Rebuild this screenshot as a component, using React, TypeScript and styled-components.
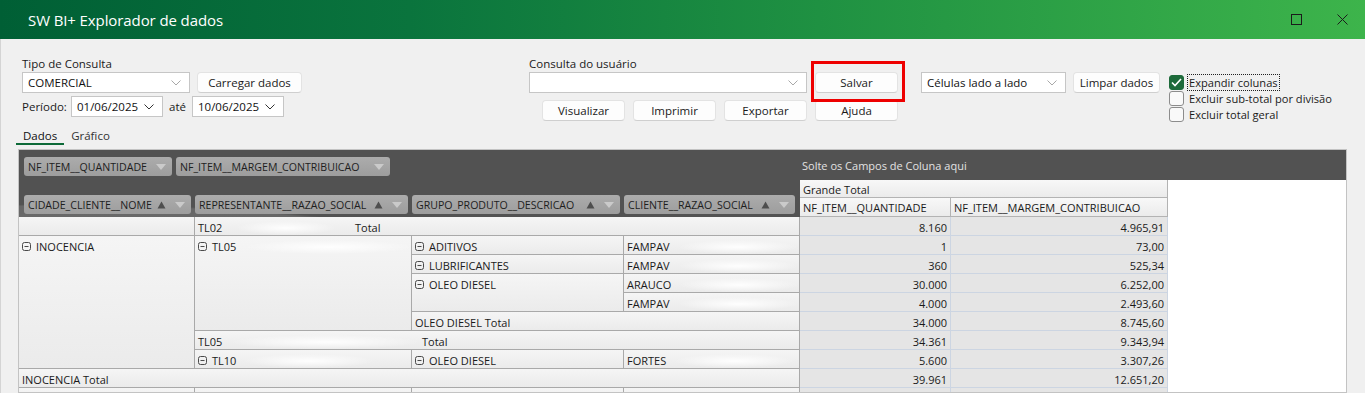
import React from 'react';
import styled, { createGlobalStyle } from 'styled-components';

const Global = createGlobalStyle`
  html, body { margin: 0; padding: 0; }
  body {
    width: 1365px; height: 393px; overflow: hidden; background: #f0f0f0;
    font-family: "Open Sans", "Noto Sans", sans-serif;
  }
  * { box-sizing: border-box; }
`;

const Window = styled.div`
  width: 1365px; height: 393px; display: flex; flex-direction: column;
  background: #f0f0f0; overflow: hidden;
`;

const TitleBar = styled.div`
  height: 39px; flex: none; display: flex; align-items: center;
  background: linear-gradient(90deg, #005f35 0%, #0a743d 30%, #1f9142 60%, #3db44b 100%);
  padding-left: 28px;
`;

const Title = styled.div`
  color: #ffffff; font-size: 15px; letter-spacing: -0.1px; padding-top: 1px;
`;

const WinControls = styled.div`
  margin-left: auto; display: flex; height: 100%;
`;

const WinButton = styled.div`
  width: 46px; height: 100%; display: flex; align-items: center; justify-content: center;
`;

const Body = styled.div`
  flex: 1; display: flex; flex-direction: column; min-height: 0;
  box-shadow: inset 1px 0 0 #d4d4d4;
`;

const Controls = styled.div`
  height: 87px; flex: none; display: flex; padding: 16px 0 0 22px;
  font-size: 11.5px; color: #1a1a1a;
`;

const Group = styled.div<{ $w?: number }>`
  ${p => (p.$w ? `width: ${p.$w}px;` : '')}
  flex: none; display: flex; flex-direction: column;
`;

const Label = styled.div`
  height: 17px; line-height: 17px;
`;

const Row = styled.div<{ $mt?: number; $pl?: number; $gap?: number; $top?: boolean }>`
  display: flex; align-items: ${p => (p.$top ? 'flex-start' : 'center')};
  gap: ${p => p.$gap ?? 7}px;
  margin-top: ${p => p.$mt ?? 0}px;
  padding-left: ${p => p.$pl ?? 0}px;
`;

const SelectBox = styled.div<{ $w: number }>`
  width: ${p => p.$w}px; height: 21px; background: #ffffff;
  border: 1px solid #c6c6c6; display: flex; align-items: center;
  padding: 0 8px 0 5px; font-size: 11.5px; color: #111;
`;

const SelectText = styled.span`
  flex: 1; white-space: nowrap;
`;

const Button = styled.div<{ $w: number }>`
  width: ${p => p.$w}px; height: 21px; background: #fdfdfd;
  border: 1px solid #e3e3e3; border-bottom-color: #cfcfcf; border-radius: 4px;
  display: flex; align-items: center; justify-content: center;
  font-size: 11.5px; color: #1a1a1a;
`;

const Highlight = styled.div`
  position: relative;
`;

const RedFrame = styled.div`
  position: absolute; left: -4px; top: -11px; width: 94px; height: 41px;
  border: 3px solid #ee0000; pointer-events: none;
`;

const InlineText = styled.span<{ $w?: number; $center?: boolean }>`
  ${p => (p.$w ? `width: ${p.$w}px;` : '')}
  text-align: ${p => (p.$center ? 'center' : 'left')};
  white-space: nowrap;
`;

const Checks = styled.div`
  display: flex; flex-direction: column; gap: 2px; margin-top: 3px; margin-left: 2px;
`;

const CheckRow = styled.div`
  display: flex; align-items: center; gap: 4px; height: 14px;
`;

const Box = styled.div<{ $checked?: boolean }>`
  width: 15px; height: 15px; border-radius: 3px; flex: none;
  display: flex; align-items: center; justify-content: center;
  background: ${p => (p.$checked ? '#1d6a3a' : '#f9f9f9')};
  border: 1px solid ${p => (p.$checked ? '#1d6a3a' : '#8c8c8c')};
`;

const CheckLabel = styled.span<{ $focus?: boolean }>`
  font-size: 11.1px; white-space: nowrap; padding: 0 1px;
  outline: ${p => (p.$focus ? '1px dotted #202020' : 'none')};
`;

const Tabs = styled.div`
  height: 19px; flex: none; display: flex; padding-left: 16px; font-size: 11.5px;
`;

const Tab = styled.div<{ $active?: boolean }>`
  height: 19px; padding: 2px 7px 0; line-height: 15px;
  color: ${p => (p.$active ? '#111' : '#333')};
  border-bottom: 2px solid ${p => (p.$active ? '#0d6a38' : 'transparent')};
`;

const Pivot = styled.div`
  margin: 4px 18px 0 18px; flex: 1; min-height: 0;
  border: 1px solid #c3c3c3; background: #ffffff; overflow: hidden;
  display: grid;
  grid-template-columns: 176px 217px 212px 176px 151px 217px 1fr;
  grid-template-rows: 30px 18px 19px repeat(10, 19px);
  font-size: 11px; color: #1a1a1a;
`;

const FieldZone = styled.div`
  grid-row: 1 / 4; grid-column: 1 / 5;
  background:
    radial-gradient(ellipse 560px 60px at 40px 92px, rgba(255,255,255,0.16) 0%, rgba(255,255,255,0.12) 60%, rgba(255,255,255,0) 63%),
    #525252;
  display: flex; flex-direction: column; justify-content: space-between;
  padding: 7px 0 3px 5px;
`;

const DropZone = styled.div`
  grid-row: 1; grid-column: 5 / 8; background: #525252;
  color: #e2e2e2; padding: 8px 0 0 2px; font-size: 11px;
`;

const ChipRow = styled.div`
  display: flex; gap: 4px;
`;

const Chip = styled.div<{ $w: number }>`
  width: ${p => p.$w}px; height: 19px; flex: none;
  background: linear-gradient(180deg, #acacac, #9d9d9d);
  border-radius: 3px; display: flex; align-items: center;
  padding: 0 6px 0 4px; color: #1e1e1e; font-size: 10.6px; white-space: nowrap;
`;

const ChipIcons = styled.span`
  margin-left: auto; display: flex; align-items: center; gap: 9px;
`;

const HeadCell = styled.div<{ $col: string; $row: string }>`
  grid-column: ${p => p.$col}; grid-row: ${p => p.$row};
  background: linear-gradient(180deg, #f8f8f8, #ebebeb);
  border-right: 1px solid #b3b3b3; border-bottom: 1px solid #b3b3b3;
  padding: 2px 3px 0; line-height: 16px; white-space: nowrap;
`;

const RowCell = styled.div<{ $col: string; $row: string }>`
  grid-column: ${p => p.$col}; grid-row: ${p => p.$row};
  background: linear-gradient(180deg, #f5f5f5, #ebebeb);
  border-right: 1px solid #a9a9a9; border-bottom: 1px solid #a9a9a9;
  padding: 2px 3px 0; line-height: 17px; white-space: nowrap;
  display: flex; align-items: flex-start; overflow: hidden;
`;

const Expand = styled.span`
  display: inline-flex; align-items: center; height: 17px; margin-right: 5px;
`;

const Name = styled.span<{ $w?: number }>`
  display: inline-flex; align-items: flex-start; flex: none;
  ${p => (p.$w ? `width: ${p.$w}px;` : '')}
`;

const Smudge = styled.span<{ $w: number; $ml?: number }>`
  display: inline-block; width: ${p => p.$w}px; height: 14px; margin-top: 2px;
  margin-left: ${p => p.$ml ?? 8}px;
  background: radial-gradient(ellipse closest-side, rgba(255,255,255,0.95), rgba(255,255,255,0));
`;

const ValueCell = styled.div<{ $col: number; $row: number }>`
  grid-column: ${p => p.$col}; grid-row: ${p => p.$row};
  background: #e5e5e5;
  border-right: 1px solid #ccd5e2; border-bottom: 1px solid #ccd5e2;
  padding: 2px 3px 0 0; line-height: 17px; text-align: right; white-space: nowrap;
`;

const Chevron = ({ color = '#a8a8a8' }: { color?: string }) => (
  <svg width="10" height="6" viewBox="0 0 10 6">
    <path d="M0.5 0.5 L5 5 L9.5 0.5" fill="none" stroke={color} strokeWidth="1" />
  </svg>
);

const SortUp = () => (
  <svg width="9" height="8" viewBox="0 0 9 8"><path d="M4.5 0.5 L8.5 7.5 L0.5 7.5 Z" fill="#4e4e4e" /></svg>
);

const DropDown = () => (
  <svg width="10" height="6" viewBox="0 0 10 6"><path d="M0 0 L10 0 L5 6 Z" fill="#cacaca" /></svg>
);

const Minus = () => (
  <svg width="9" height="9" viewBox="0 0 9 9">
    <rect x="0.5" y="0.5" width="8" height="8" rx="2" fill="none" stroke="#4a4a4a" />
    <path d="M2.5 4.5 H6.5" stroke="#4a4a4a" />
  </svg>
);

const Check = () => (
  <svg width="11" height="9" viewBox="0 0 11 9">
    <path d="M1 4.5 L4 7.5 L10 1" fill="none" stroke="#ffffff" strokeWidth="1.6" />
  </svg>
);

const values: [string, string][] = [
  ['8.160', '4.965,91'],
  ['1', '73,00'],
  ['360', '525,34'],
  ['30.000', '6.252,00'],
  ['4.000', '2.493,60'],
  ['34.000', '8.745,60'],
  ['34.361', '9.343,94'],
  ['5.600', '3.307,26'],
  ['39.961', '12.651,20'],
  ['', ''],
];

const r = (n: number, span = 1) => `${3 + n} / span ${span}`;

export default function App() {
  return (
    <Window>
      <Global />
      <TitleBar>
        <Title>SW BI+ Explorador de dados</Title>
        <WinControls>
          <WinButton>
            <svg width="11" height="11" viewBox="0 0 11 11">
              <rect x="0.5" y="0.5" width="10" height="10" fill="none" stroke="#1b1b1b" />
            </svg>
          </WinButton>
          <WinButton>
            <svg width="11" height="11" viewBox="0 0 11 11">
              <path d="M0.5 0.5 L10.5 10.5 M10.5 0.5 L0.5 10.5" stroke="#1b1b1b" />
            </svg>
          </WinButton>
        </WinControls>
      </TitleBar>
      <Body>
        <Controls>
          <Group $w={507}>
            <Label>Tipo de Consulta</Label>
            <Row>
              <SelectBox $w={168}><SelectText>COMERCIAL</SelectText><Chevron /></SelectBox>
              <Button $w={105}>Carregar dados</Button>
            </Row>
            <Row $mt={3} $gap={0}>
              <InlineText $w={49}>Período:</InlineText>
              <SelectBox $w={92}><SelectText>01/06/2025</SelectText><Chevron color="#333" /></SelectBox>
              <InlineText $w={29} $center>até</InlineText>
              <SelectBox $w={92}><SelectText>10/06/2025</SelectText><Chevron color="#333" /></SelectBox>
            </Row>
          </Group>
          <Group $w={392}>
            <Label>Consulta do usuário</Label>
            <Row $gap={8}>
              <SelectBox $w={278}><SelectText></SelectText><Chevron /></SelectBox>
              <Highlight>
                <Button $w={83}>Salvar</Button>
                <RedFrame />
              </Highlight>
            </Row>
            <Row $mt={7} $pl={13} $gap={8}>
              <Button $w={83}>Visualizar</Button>
              <Button $w={83}>Imprimir</Button>
              <Button $w={83}>Exportar</Button>
              <Button $w={83}>Ajuda</Button>
            </Row>
          </Group>
          <Group>
            <Row $mt={17} $gap={7} $top>
              <SelectBox $w={145}><SelectText>Células lado a lado</SelectText><Chevron /></SelectBox>
              <Button $w={87}>Limpar dados</Button>
              <Checks>
                <CheckRow><Box $checked><Check /></Box><CheckLabel $focus>Expandir colunas</CheckLabel></CheckRow>
                <CheckRow><Box /><CheckLabel>Excluir sub-total por divisão</CheckLabel></CheckRow>
                <CheckRow><Box /><CheckLabel>Excluir total geral</CheckLabel></CheckRow>
              </Checks>
            </Row>
          </Group>
        </Controls>
        <Tabs>
          <Tab $active>Dados</Tab>
          <Tab>Gráfico</Tab>
        </Tabs>
        <Pivot>
          <FieldZone>
            <ChipRow>
              <Chip $w={148}>NF_ITEM__QUANTIDADE<ChipIcons><DropDown /></ChipIcons></Chip>
              <Chip $w={214}>NF_ITEM__MARGEM_CONTRIBUICAO<ChipIcons><DropDown /></ChipIcons></Chip>
            </ChipRow>
            <ChipRow>
              <Chip $w={167}>CIDADE_CLIENTE__NOME<ChipIcons><SortUp /><DropDown /></ChipIcons></Chip>
              <Chip $w={213}>REPRESENTANTE__RAZAO_SOCIAL<ChipIcons><SortUp /><DropDown /></ChipIcons></Chip>
              <Chip $w={208}>GRUPO_PRODUTO__DESCRICAO<ChipIcons><SortUp /><DropDown /></ChipIcons></Chip>
              <Chip $w={171}>CLIENTE__RAZAO_SOCIAL<ChipIcons><SortUp /><DropDown /></ChipIcons></Chip>
            </ChipRow>
          </FieldZone>
          <DropZone>Solte os Campos de Coluna aqui</DropZone>
          <HeadCell $col="5 / 7" $row="2">Grande Total</HeadCell>
          <HeadCell $col="5" $row="3">NF_ITEM__QUANTIDADE</HeadCell>
          <HeadCell $col="6" $row="3">NF_ITEM__MARGEM_CONTRIBUICAO</HeadCell>

          <RowCell $col="1" $row={r(1)} />
          <RowCell $col="2 / 5" $row={r(1)}>
            <Name $w={157}>TL02<Smudge $w={100} $ml={14} /></Name>Total
          </RowCell>

          <RowCell $col="1" $row={r(2, 7)}><Expand><Minus /></Expand>INOCENCIA</RowCell>
          <RowCell $col="2" $row={r(2, 5)}><Expand><Minus /></Expand><Name>TL05<Smudge $w={170} /></Name></RowCell>
          <RowCell $col="3" $row={r(2)}><Expand><Minus /></Expand>ADITIVOS</RowCell>
          <RowCell $col="4" $row={r(2)}><Name>FAMPAV<Smudge $w={120} /></Name></RowCell>
          <RowCell $col="3" $row={r(3)}><Expand><Minus /></Expand>LUBRIFICANTES</RowCell>
          <RowCell $col="4" $row={r(3)}><Name>FAMPAV<Smudge $w={120} /></Name></RowCell>
          <RowCell $col="3" $row={r(4, 2)}><Expand><Minus /></Expand>OLEO DIESEL</RowCell>
          <RowCell $col="4" $row={r(4)}><Name>ARAUCO<Smudge $w={120} /></Name></RowCell>
          <RowCell $col="4" $row={r(5)}><Name>FAMPAV<Smudge $w={120} /></Name></RowCell>
          <RowCell $col="3 / 5" $row={r(6)}>OLEO DIESEL Total</RowCell>
          <RowCell $col="2 / 5" $row={r(7)}>
            <Name $w={224}>TL05<Smudge $w={190} /></Name>Total
          </RowCell>
          <RowCell $col="2" $row={r(8)}><Expand><Minus /></Expand><Name>TL10<Smudge $w={130} /></Name></RowCell>
          <RowCell $col="3" $row={r(8)}><Expand><Minus /></Expand>OLEO DIESEL</RowCell>
          <RowCell $col="4" $row={r(8)}><Name>FORTES<Smudge $w={120} /></Name></RowCell>
          <RowCell $col="1 / 5" $row={r(9)}>INOCENCIA Total</RowCell>
          <RowCell $col="1" $row={r(10)} />
          <RowCell $col="2" $row={r(10)} />
          <RowCell $col="3" $row={r(10)} />
          <RowCell $col="4" $row={r(10)} />

          {values.map((v, i) => (
            <React.Fragment key={i}>
              <ValueCell $col={5} $row={4 + i}>{v[0]}</ValueCell>
              <ValueCell $col={6} $row={4 + i}>{v[1]}</ValueCell>
            </React.Fragment>
          ))}
        </Pivot>
      </Body>
    </Window>
  );
}
